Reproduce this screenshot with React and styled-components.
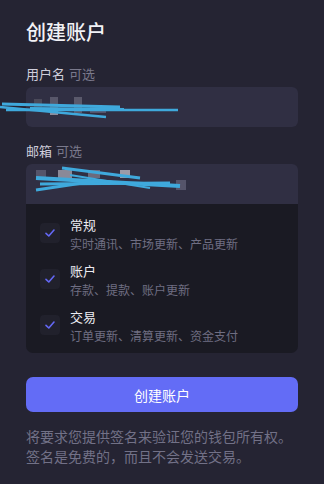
import styled, { createGlobalStyle } from "styled-components";

const GlobalStyle = createGlobalStyle`
  html, body {
    margin: 0;
    background: #252433;
  }
  body {
    font-family: "Noto Sans CJK SC", "Noto Sans", sans-serif;
  }
`;

const topics = [
  { id: "general", title: "常规", desc: "实时通讯、市场更新、产品更新" },
  { id: "account", title: "账户", desc: "存款、提款、账户更新" },
  { id: "trade", title: "交易", desc: "订单更新、清算更新、资金支付" },
];

function Scribble({ variant }) {
  if (variant === "name") {
    return (
      <Redact width="200" height="40" viewBox="0 0 200 40">
        <rect x="34" y="12" width="8" height="8" fill="#4a4959" />
        <rect x="50" y="10" width="8" height="14" fill="#58576a" />
        <rect x="50" y="24" width="8" height="4" fill="#8d8c9b" />
        <rect x="74" y="10" width="8" height="16" fill="#5a596b" />
        <rect x="90" y="20" width="16" height="6" fill="#54536a" />
        <path d="M2 17 L120 20" stroke="#3fa9dc" strokeWidth="3" fill="none" />
        <path d="M6 23 L178 23" stroke="#3fa9dc" strokeWidth="2.5" fill="none" />
        <path d="M0 20 L106 30" stroke="#3fa9dc" strokeWidth="2.5" fill="none" />
        <path d="M30 21 L124 22" stroke="#3fa9dc" strokeWidth="2" fill="none" />
      </Redact>
    );
  }
  return (
    <Redact width="200" height="40" viewBox="0 0 200 40">
      <rect x="36" y="6" width="10" height="10" fill="#55546a" />
      <rect x="58" y="6" width="14" height="8" fill="#8a8998" />
      <rect x="88" y="6" width="12" height="8" fill="#6c6b7c" />
      <rect x="120" y="6" width="10" height="8" fill="#9c9ba8" />
      <rect x="176" y="16" width="10" height="10" fill="#55546a" />
      <path d="M62 4 L140 14" stroke="#3fa9dc" strokeWidth="3" fill="none" />
      <path d="M36 14 L180 22" stroke="#3fa9dc" strokeWidth="4" fill="none" />
      <path d="M40 20 L170 19" stroke="#3fa9dc" strokeWidth="3" fill="none" />
      <path d="M36 26 L96 17" stroke="#3fa9dc" strokeWidth="3" fill="none" />
      <path d="M70 11 L150 24" stroke="#3fa9dc" strokeWidth="2" fill="none" />
    </Redact>
  );
}

function CheckIcon() {
  return (
    <svg width="12" height="12" viewBox="0 0 12 12" fill="none">
      <path
        d="M2 6.4 L4.8 9 L10 3"
        stroke="#6468f5"
        strokeWidth="1.6"
        strokeLinecap="round"
        strokeLinejoin="round"
      />
    </svg>
  );
}

export default function App() {
  return (
    <>
      <GlobalStyle />
      <Page>
        <Title>创建账户</Title>

        <Label>
          用户名<Optional>可选</Optional>
        </Label>
        <Input>
          <Scribble variant="name" />
        </Input>

        <Label>
          邮箱<Optional>可选</Optional>
        </Label>
        <div>
          <Input $attached>
            <Scribble variant="email" />
          </Input>
          <Topics>
            {topics.map((t) => (
              <Topic key={t.id}>
                <Box>
                  <CheckIcon />
                </Box>
                <div>
                  <TopicTitle>{t.title}</TopicTitle>
                  <TopicDesc>{t.desc}</TopicDesc>
                </div>
              </Topic>
            ))}
          </Topics>
        </div>

        <Button>创建账户</Button>
        <Note>
          将要求您提供签名来验证您的钱包所有权。签名是免费的，而且不会发送交易。
        </Note>
      </Page>
    </>
  );
}

const Page = styled.div`
  padding: 18px 26px 20px;
  display: flex;
  flex-direction: column;
`;

const Title = styled.h1`
  margin: 0 0 18px;
  height: 28px;
  font-size: 20px;
  line-height: 28px;
  font-weight: 500;
  color: #f2f2f6;
`;

const Label = styled.div`
  display: flex;
  align-items: baseline;
  height: 20px;
  font-size: 13px;
  line-height: 20px;
  color: #cfcedb;
  margin-bottom: 3px;
`;

const Optional = styled.span`
  margin-left: 4px;
  font-size: 13px;
  color: #7a798c;
`;

const Input = styled.div`
  position: relative;
  height: 40px;
  background: #302f43;
  border-radius: ${(p) => (p.$attached ? "6px 6px 0 0" : "6px")};
  margin-bottom: ${(p) => (p.$attached ? "0" : "14px")};
`;

const Redact = styled.svg`
  position: absolute;
  left: -26px;
  top: 0;
  overflow: visible;
`;

const Topics = styled.div`
  background: #1a1a23;
  border-radius: 0 0 7px 7px;
  padding: 11px 14px 8px;
  display: flex;
  flex-direction: column;
  gap: 8px;
`;

const Topic = styled.div`
  display: flex;
  align-items: center;
  gap: 10px;
`;

const Box = styled.div`
  width: 20px;
  height: 20px;
  border-radius: 4px;
  background: #21212c;
  display: flex;
  align-items: center;
  justify-content: center;
  margin-top: -3px;
`;

const TopicTitle = styled.div`
  font-size: 13px;
  line-height: 20px;
  color: #ececf2;
`;

const TopicDesc = styled.div`
  font-size: 12px;
  line-height: 18px;
  color: #6f6e82;
`;

const Button = styled.button`
  margin-top: 24px;
  height: 35px;
  border: none;
  border-radius: 7px;
  background: #636cf6;
  color: #ffffff;
  font-family: inherit;
  font-size: 14px;
  cursor: pointer;
`;

const Note = styled.p`
  margin: 14px 0 0;
  font-size: 14px;
  line-height: 20px;
  color: #727187;
`;
